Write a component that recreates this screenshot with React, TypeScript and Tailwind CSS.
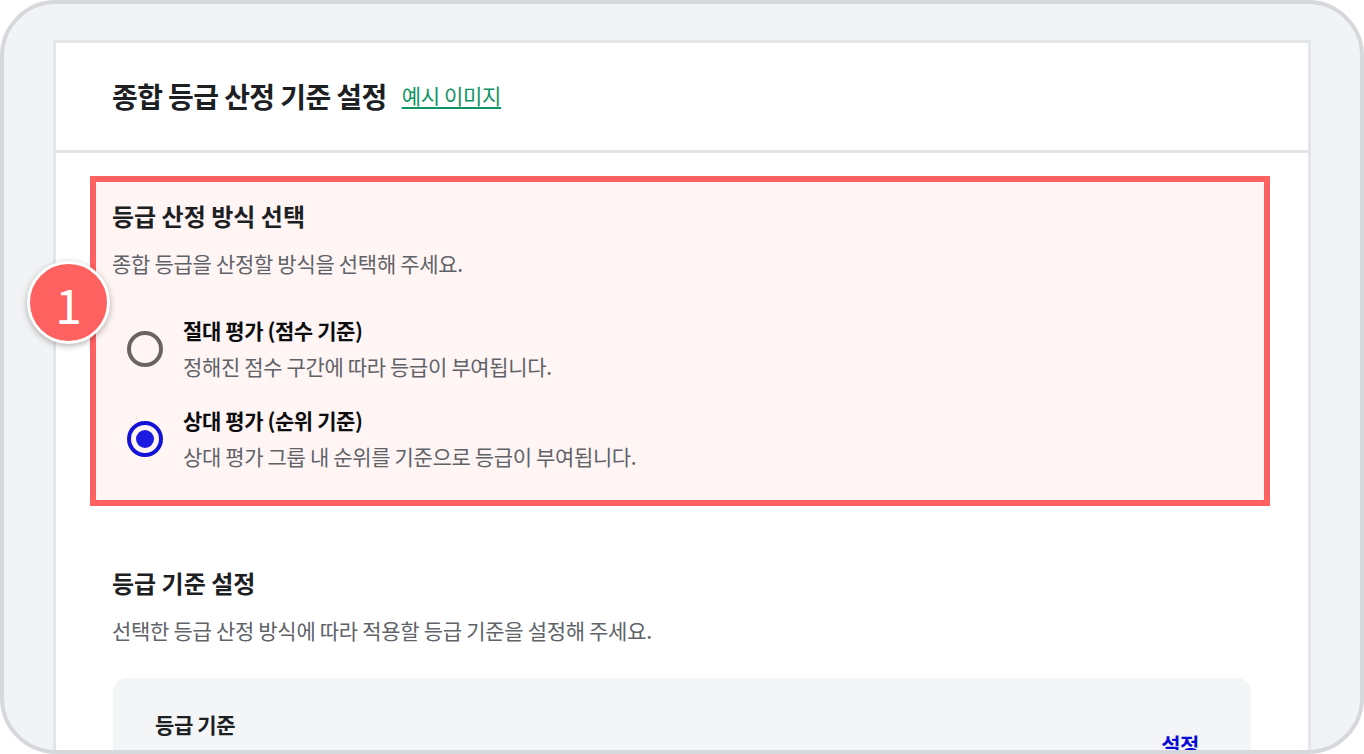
const FONT = { fontFamily: '"Noto Sans CJK KR", "Noto Sans", sans-serif' };

const OPTIONS = [
  { title: "절대 평가 (점수 기준)", desc: "정해진 점수 구간에 따라 등급이 부여됩니다.", selected: false },
  { title: "상대 평가 (순위 기준)", desc: "상대 평가 그룹 내 순위를 기준으로 등급이 부여됩니다.", selected: true },
];

function Radio({ selected }: { selected: boolean }) {
  if (selected) {
    return (
      <span className="mt-[2px] flex h-[36px] w-[36px] shrink-0 items-center justify-center rounded-full border-[4px] border-[#1212d8]">
        <span className="h-[18px] w-[18px] rounded-full bg-[#1a1ae0]" />
      </span>
    );
  }
  return <span className="mt-[2px] h-[36px] w-[36px] shrink-0 rounded-full border-[4px] border-[#6b6361]" />;
}

export default function App() {
  return (
    <div className="h-[754px] w-[1364px] overflow-hidden bg-white" style={FONT}>
      <div className="h-[754px] overflow-hidden rounded-[56px] border-4 border-[#d6d8db] bg-[#f2f3f5] px-[49px] pt-[36px]">
        <div className="relative h-[720px] border-[3px] border-b-0 border-[#e3e6e9] bg-white">
          {/* header */}
          <div className="flex h-[110px] items-center gap-[15px] border-b-[3px] border-[#e3e6e9] pb-[2px] pl-[56px]">
            <h1 className="text-[28px] font-bold tracking-[-0.6px] text-[#1d2023]">종합 등급 산정 기준 설정</h1>
            <a className="text-[21px] tracking-[-0.3px] text-[#0f9463] underline underline-offset-[3px]">예시 이미지</a>
          </div>

          <div className="pl-[34px] pr-[38px] pt-[23px]">
            {/* highlighted section */}
            <section className="h-[330px] border-[6px] border-[#ff6060] bg-[#fff5f4] pl-[16px] pt-[19px]">
              <h2 className="text-[24px] font-bold leading-[30px] text-[#1d2023]">등급 산정 방식 선택</h2>
              <p className="mt-[19px] text-[21px] leading-[26px] tracking-[-0.3px] text-[#5f6368]">종합 등급을 산정할 방식을 선택해 주세요.</p>
              <div className="mt-[41px] flex flex-col gap-[28px]">
                {OPTIONS.map((option) => (
                  <div key={option.title} className="flex items-center gap-[20px] pl-[15px]">
                    <Radio selected={option.selected} />
                    <div>
                      <div className="text-[21px] font-bold leading-[26px] tracking-[-0.4px] text-[#0c0c0e]">{option.title}</div>
                      <div className="mt-[10px] text-[21px] leading-[26px] tracking-[-0.35px] text-[#5f6368]">{option.desc}</div>
                    </div>
                  </div>
                ))}
              </div>
            </section>

            {/* grade criteria */}
            <section className="pl-[22px] pr-[19px] pt-[62px]">
              <h2 className="text-[24px] font-bold leading-[30px] text-[#1d2023]">등급 기준 설정</h2>
              <p className="mt-[19px] text-[21px] leading-[26px] tracking-[-0.3px] text-[#5f6368]">선택한 등급 산정 방식에 따라 적용할 등급 기준을 설정해 주세요.</p>
              <div className="ml-[1px] mt-[35px] h-[200px] rounded-[14px] bg-[#f3f5f6] pl-[42px] pr-[52px] pt-[32px]">
                <div className="flex items-start justify-between">
                  <div className="text-[21px] font-bold leading-[28px] tracking-[-0.4px] text-[#1d2023]">등급 기준</div>
                  <div className="mt-[21px] text-[21px] font-bold leading-[26px] tracking-[-0.4px] text-[#0a0ad6]">설정</div>
                </div>
              </div>
            </section>
          </div>

          {/* step badge */}
          <div className="absolute left-[-29px] top-[218px] flex h-[83px] w-[83px] items-center justify-center rounded-full border-[3px] border-white bg-[#ff6060] text-[48px] leading-none text-white shadow-[0_2px_6px_rgba(0,0,0,0.3)]">
            1
          </div>
        </div>
      </div>
    </div>
  );
}
